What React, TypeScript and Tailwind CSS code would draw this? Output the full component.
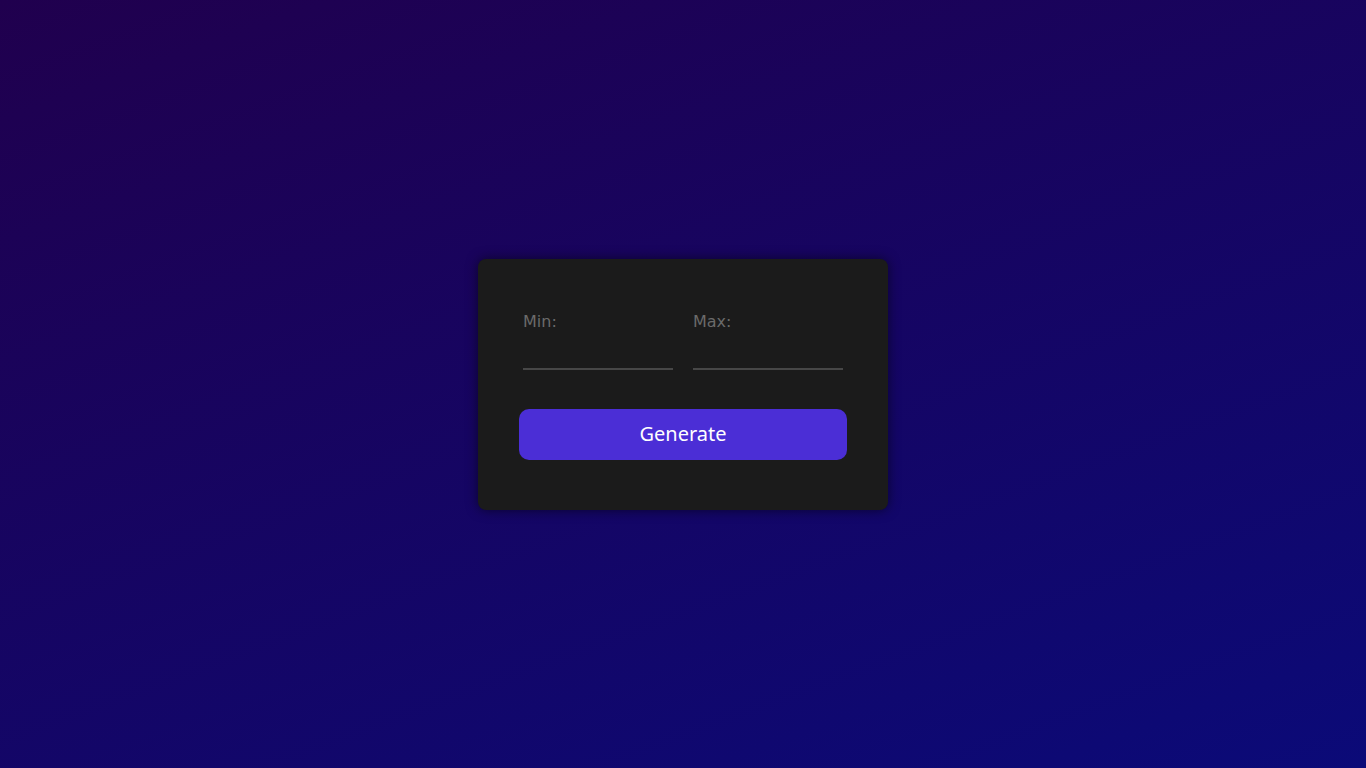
export default function App() {
  return (
    <div className="min-h-screen w-full flex items-center justify-center bg-[linear-gradient(160deg,#20004e_0%,#0b0a78_100%)]">
      <div className="w-[410px] h-[251px] rounded-lg bg-[#1b1b1b] shadow-[0_0_12px_rgba(0,0,0,0.55)] px-[41px] pt-[53px]">
        <div className="flex gap-5 px-1">
          <div className="flex flex-col w-[150px]">
            <label className="text-[16px] leading-5 text-[#6a6a6a] font-['DejaVu_Sans',sans-serif]">Min:</label>
            <input className="mt-[18px] h-[20px] bg-transparent border-b-2 border-[#474747] outline-none text-white" />
          </div>
          <div className="flex flex-col w-[150px]">
            <label className="text-[16px] leading-5 text-[#6a6a6a] font-['DejaVu_Sans',sans-serif]">Max:</label>
            <input className="mt-[18px] h-[20px] bg-transparent border-b-2 border-[#474747] outline-none text-white" />
          </div>
        </div>
        <button className="mt-[39px] w-full h-[51px] rounded-[10px] bg-[#4b2ed6] text-white text-[20px] font-['Noto_Sans',sans-serif]">
          Generate
        </button>
      </div>
    </div>
  );
}
